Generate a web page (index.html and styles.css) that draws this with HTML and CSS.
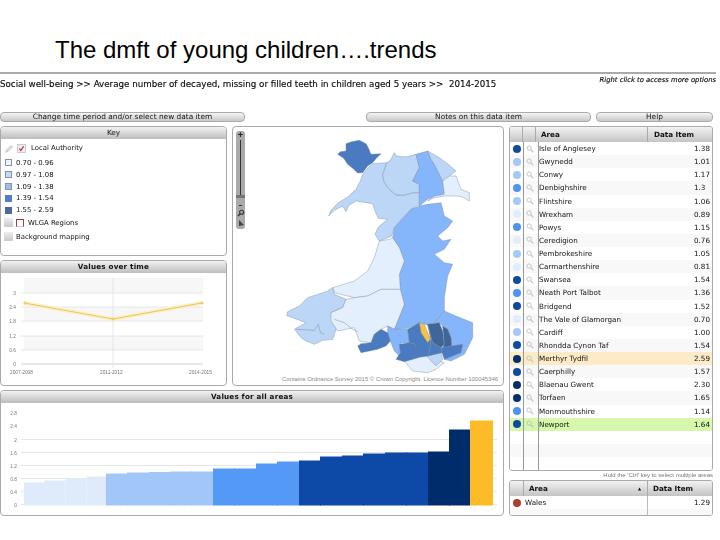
FILE: index.html
```html
<!DOCTYPE html>
<html lang="en">
<head>
<meta charset="utf-8">
<title>The dmft of young children</title>
<link rel="stylesheet" href="styles.css">
</head>
<body>
<svg class="defs" width="0" height="0" aria-hidden="true">
  <symbol id="lens" viewBox="0 0 12 12"><circle cx="4.6" cy="4.6" r="3.2" fill="none" stroke="#bdbdbd" stroke-width="1.3"/><path d="M7 7l4 4" stroke="#bdbdbd" stroke-width="1.6"/></symbol>
</svg>
<h1 class="title">The dmft of young children….trends</h1>
<div class="app">
  <div class="crumb">
    <span>Social well-being &gt;&gt; Average number of decayed, missing or filled teeth in children aged 5 years &gt;&gt;&nbsp; 2014-2015</span>
    <em>Right click to access more options</em>
  </div>
  <div class="toolbar">
    <div class="btn btn-a">Change time period and/or select new data item</div>
    <div class="btn btn-b">Notes on this data item</div>
    <div class="btn btn-c">Help</div>
  </div>
  <div class="workspace">
    <div class="left">
      <section class="panel key">
        <div class="head">Key</div>
        <div class="key-body">
          <div class="key-top">
            <svg class="pencil" viewBox="0 0 12 12"><path d="M1 11l1-3 6-6 2 2-6 6z" fill="#e4e4e4" stroke="#b5b5b5"/></svg>
            <span class="check"><svg viewBox="0 0 10 10"><path d="M2 5l2 3 4-6" fill="none" stroke="#c0203a" stroke-width="1.6"/></svg></span>
            <span>Local Authority</span>
          </div>
          <div class="legend"><i class="sw s1"></i>0.70 - 0.96</div>
          <div class="legend"><i class="sw s2"></i>0.97 - 1.08</div>
          <div class="legend"><i class="sw s3"></i>1.09 - 1.38</div>
          <div class="legend"><i class="sw s4"></i>1.39 - 1.54</div>
          <div class="legend"><i class="sw s5"></i>1.55 - 2.59</div>
          <div class="layer gap-a"><i class="toggle"></i><i class="red-box"></i>WLGA Regions</div>
          <div class="layer gap-b"><i class="toggle"></i>Background mapping</div>
        </div>
      </section>
      <section class="panel trend">
        <div class="head head-b">Values over time</div>
        <svg class="chart" viewBox="0 -3 225 113" width="225" height="113">
          <g class="band"><rect x="23" y="2" width="179" height="15"/><rect x="23" y="31" width="179" height="14"/><rect x="23" y="60" width="179" height="14"/></g>
          <g class="grid">
            <path d="M20 17H202M20 31H202M20 45H202M20 60H202M20 74H202"/>
            <path class="axis" d="M20 88H202"/>
            <path d="M112 2V92"/>
          </g>
          <path class="glow" d="M23 27L112 43 201 27"/>
          <path class="line" d="M23 27L112 43 201 27"/>
          <g class="pts"><circle cx="24" cy="27" r="1.5"/><circle cx="112" cy="43" r="1.5"/><circle cx="201" cy="27" r="1.5"/></g>
          <g class="tick">
            <text x="15" y="19" text-anchor="end">3</text><text x="15" y="33" text-anchor="end">2.4</text><text x="15" y="47" text-anchor="end">1.8</text><text x="15" y="62" text-anchor="end">1.2</text><text x="15" y="76" text-anchor="end">0.6</text><text x="15" y="90" text-anchor="end">0</text>
            <text x="9" y="98">2007-2008</text><text x="99" y="98">2011-2012</text><text x="188" y="98">2014-2015</text>
          </g>
        </svg>
      </section>
      <section class="panel map">
        <svg class="map-svg" viewBox="6 18 807 774" width="269" height="258">
          <g class="areas">
            <path class="c4" d="M345 68L362 62 385 58 405 68 412 80 420 100 450 98 436 112 425 125 410 135 395 155 380 156 365 142 350 130 338 112 320 100 328 92 345 90z"/>
            <path class="c2" d="M293 285L300 268 322 245 350 228 375 205 388 180 395 160 410 142 425 128 468 125 455 160 458 180 470 200 495 222 520 222 545 215 565 215 565 250 540 265 515 290 490 320 482 345 445 360 432 340 442 318 470 295 442 292 432 270 425 248 405 245 375 240 352 255 345 272 335 255 310 268z"/>
            <path class="c2" d="M468 125L478 118 490 95 497 105 525 108 555 100 565 140 545 180 565 190 565 215 545 215 520 222 495 222 470 200 458 180 455 160z"/>
            <path class="c3" d="M555 100L590 90 600 115 610 130 635 180 640 220 610 226 590 235 565 255 565 190 545 180 565 140z"/>
            <path class="c2" d="M590 90L625 110 650 128 675 150 655 165 640 180 635 180 610 130 600 115z"/>
            <path class="c1" d="M675 165L690 205 715 215 715 240 695 228 680 225 640 225 605 232 590 240 610 226 640 220 635 180 655 165z"/>
            <path class="c3" d="M565 255L590 250 630 245 640 285 665 300 650 320 620 345 635 360 660 355 640 385 610 400 640 425 665 430 650 465 640 530 640 570 610 605 590 612 565 605 530 622 490 625 520 550 508 505 505 460 520 420 505 380 485 350 490 320 540 265z"/>
            <path class="c1" d="M445 360L475 355 485 350 505 380 520 420 505 460 508 505 450 505 410 525 370 530 310 515 305 500 370 480 410 450 430 410z"/>
            <path class="c2" d="M167 584L170 572 205 555 230 530 290 510 305 500 310 520 345 535 335 560 300 575 315 625 305 655 275 658 250 670 225 660 210 650 190 625 225 605 185 590z"/>
            <path class="c1" d="M345 535L370 530 410 525 450 505 508 505 520 550 490 625 470 615 450 625 430 640 420 665 385 660 370 620 320 630 300 600 300 575 335 560z"/>
            <path class="c3" d="M640 570L675 585 725 605 725 650 700 700 660 720 640 715 690 695 695 670 662 675 660 650 650 625 635 615 625 605 610 605z"/>
            <path class="c3" d="M470 615L490 625 530 625 535 665 510 665 505 705 490 690 478 660 470 635z"/>
            <path class="c4" d="M380 675L390 668 420 665 430 640 450 625 470 635 478 660 465 675 440 685 390 695z"/>
            <path class="c1" d="M520 720L555 712 585 700 615 715 640 725 615 745 590 755 545 750z"/>
            <path class="c4" d="M505 670L535 665 555 670 560 710 520 722 495 715 508 695z"/>
            <path class="c2" d="M582 700L630 695 635 715 615 735z"/>
            <path class="c4" d="M530 625L565 605 600 660 592 705 555 710 555 670 535 665z"/>
            <path class="c4" d="M590 610L605 665 630 680 633 695 592 705 600 660z"/>
            <path class="c5" d="M590 610L625 605 635 630 640 670 630 680 605 665z"/>
            <path class="c5" d="M635 615L650 625 660 650 662 675 635 680 640 670z"/>
            <path class="c4" d="M630 680L662 675 695 670 690 695 640 715 633 695z"/>
            <path class="cy" d="M565 605L580 610 598 655 590 665 570 635z"/>
          </g>
          <path class="inlet" d="M195 625L250 628 262 610 268 635 280 640M340 605L365 625 380 632M310 595L340 605"/>
        </svg>
        <div class="zoombar">
          <span class="z-plus">+</span>
          <i class="z-track"></i>
          <i class="z-thumb"></i>
          <i class="z-minus"></i>
          <svg class="z-ico" viewBox="0 0 8 8"><circle cx="4.6" cy="3.2" r="2" fill="none" stroke="#333" stroke-width="1.1"/><path d="M3 5L1 7" stroke="#333" stroke-width="1.4"/></svg>
          <svg class="z-ico" viewBox="0 0 8 8"><path d="M2 1L7 6 2 7z" fill="#444"/></svg>
        </div>
        <div class="copy">Contains Ordnance Survey 2015 © Crown Copyright. Licence Number 100045346</div>
      </section>
      <section class="panel bars">
        <div class="head head-b">Values for all areas</div>
        <svg class="chart" viewBox="0 4.500 501 112" width="501" height="112">
          <g class="grid"><path d="M20 41H496M20 54H496M20 67H496M20 80H496M20 93H496M20 106H496"/></g>
          <g class="r1"><rect x="23" y="84" width="21" height="23"/><rect x="43.500" y="82" width="21" height="25"/><rect x="64.500" y="80" width="21" height="27"/><rect x="85.500" y="78" width="21.500" height="29"/></g>
          <g class="r2"><rect x="105" y="75" width="22" height="32"/><rect x="126" y="74" width="22" height="33"/><rect x="148" y="73.500" width="22" height="33.500"/><rect x="169" y="73" width="22" height="34"/><rect x="190" y="73" width="22" height="34"/></g>
          <g class="r3"><rect x="212" y="70" width="22" height="37"/><rect x="233" y="70" width="22" height="37"/><rect x="255" y="65" width="22" height="42"/><rect x="276" y="63" width="22" height="44"/></g>
          <g class="r4"><rect x="298" y="62" width="22" height="45"/><rect x="319" y="58" width="22" height="49"/><rect x="341" y="57" width="22" height="50"/><rect x="362" y="55" width="22" height="52"/><rect x="384" y="54" width="22" height="53"/><rect x="405" y="54" width="22" height="53"/></g>
          <g class="r5"><rect x="427" y="53" width="22" height="54"/><rect x="448" y="31" width="21" height="76"/></g>
          <rect class="ry" x="469" y="22" width="23" height="85"/>
          <g class="tick">
            <text x="16" y="16" text-anchor="end">2.8</text><text x="16" y="29" text-anchor="end">2.4</text><text x="16" y="43" text-anchor="end">2</text><text x="16" y="56" text-anchor="end">1.6</text><text x="16" y="69" text-anchor="end">1.2</text><text x="16" y="82" text-anchor="end">0.8</text><text x="16" y="95" text-anchor="end">0.4</text><text x="16" y="108" text-anchor="end">0</text>
          </g>
        </svg>
      </section>
    </div>
    <div class="right">
      <div class="table main-table">
        <div class="t-head"><span></span><span></span><b>Area</b><b>Data Item</b></div>
        <div class="t-rows">
          <div class="row"><i class="dot d4"></i><svg class="lens"><use href="#lens"/></svg><span>Isle of Anglesey</span><span class="val">1.38</span></div>
          <div class="row"><i class="dot d2"></i><svg class="lens"><use href="#lens"/></svg><span>Gwynedd</span><span class="val">1.01</span></div>
          <div class="row"><i class="dot d2"></i><svg class="lens"><use href="#lens"/></svg><span>Conwy</span><span class="val">1.17</span></div>
          <div class="row"><i class="dot d3"></i><svg class="lens"><use href="#lens"/></svg><span>Denbighshire</span><span class="val">1.3&nbsp;&nbsp;</span></div>
          <div class="row"><i class="dot d2"></i><svg class="lens"><use href="#lens"/></svg><span>Flintshire</span><span class="val">1.06</span></div>
          <div class="row"><i class="dot d1"></i><svg class="lens"><use href="#lens"/></svg><span>Wrexham</span><span class="val">0.89</span></div>
          <div class="row"><i class="dot d3"></i><svg class="lens"><use href="#lens"/></svg><span>Powys</span><span class="val">1.15</span></div>
          <div class="row"><i class="dot d1"></i><svg class="lens"><use href="#lens"/></svg><span>Ceredigion</span><span class="val">0.76</span></div>
          <div class="row"><i class="dot d2"></i><svg class="lens"><use href="#lens"/></svg><span>Pembrokeshire</span><span class="val">1.05</span></div>
          <div class="row"><i class="dot d1"></i><svg class="lens"><use href="#lens"/></svg><span>Carmarthenshire</span><span class="val">0.81</span></div>
          <div class="row"><i class="dot d4"></i><svg class="lens"><use href="#lens"/></svg><span>Swansea</span><span class="val">1.54</span></div>
          <div class="row"><i class="dot d3"></i><svg class="lens"><use href="#lens"/></svg><span>Neath Port Talbot</span><span class="val">1.36</span></div>
          <div class="row"><i class="dot d4"></i><svg class="lens"><use href="#lens"/></svg><span>Bridgend</span><span class="val">1.52</span></div>
          <div class="row"><i class="dot d1"></i><svg class="lens"><use href="#lens"/></svg><span>The Vale of Glamorgan</span><span class="val">0.70</span></div>
          <div class="row"><i class="dot d2"></i><svg class="lens"><use href="#lens"/></svg><span>Cardiff</span><span class="val">1.00</span></div>
          <div class="row"><i class="dot d4"></i><svg class="lens"><use href="#lens"/></svg><span>Rhondda Cynon Taf</span><span class="val">1.54</span></div>
          <div class="row hl-a"><i class="dot d5"></i><svg class="lens"><use href="#lens"/></svg><span>Merthyr Tydfil</span><span class="val">2.59</span></div>
          <div class="row"><i class="dot d4"></i><svg class="lens"><use href="#lens"/></svg><span>Caerphilly</span><span class="val">1.57</span></div>
          <div class="row"><i class="dot d5"></i><svg class="lens"><use href="#lens"/></svg><span>Blaenau Gwent</span><span class="val">2.30</span></div>
          <div class="row"><i class="dot d5"></i><svg class="lens"><use href="#lens"/></svg><span>Torfaen</span><span class="val">1.65</span></div>
          <div class="row"><i class="dot d3"></i><svg class="lens"><use href="#lens"/></svg><span>Monmouthshire</span><span class="val">1.14</span></div>
          <div class="row hl-b"><i class="dot d4"></i><svg class="lens"><use href="#lens"/></svg><span>Newport</span><span class="val">1.64</span></div>
          <div class="row"></div>
          <div class="row"></div>
          <div class="row"></div>
        </div>
      </div>
      <div class="hint">Hold the 'Ctrl' key to select multiple areas</div>
      <div class="table wales-table">
        <div class="w-head"><span></span><b>Area<i class="sort">▲</i></b><b>Data Item</b></div>
        <div class="w-row"><i class="dot brown"></i><span>Wales</span><span class="val">1.29</span></div>
        <div class="w-row"><span></span><span></span><span></span></div>
      </div>
    </div>
  </div>
</div>
</body>
</html>
```
FILE: styles.css
```css
* { box-sizing: border-box; }
body { margin: 0; width: 720px; height: 540px; overflow: hidden; background: #fff; font-family: "DejaVu Sans", sans-serif; color: #111; }
.defs { position: absolute; }
.title { margin: 0; height: 72px; padding: 36px 0 0 55px; font: 400 24px/28px "Liberation Sans", sans-serif; color: #000; }
.app { width: 716px; filter: blur(.3px); }
.crumb { border-top: 2px solid #aaa; height: 40px; padding-top: 2px; display: flex; justify-content: space-between; align-items: flex-start; font-size: 8.730px; line-height: 11px; white-space: nowrap; -webkit-text-stroke: .15px #000; }
.crumb span { margin-top: 3px; }
.crumb em { font-size: 6.800px; line-height: 9px; }
.toolbar { display: flex; height: 10px; margin-bottom: 4px; }
.btn { height: 10px; border: 1px solid #aaa; border-radius: 4px; background: linear-gradient(#f4f4f4, #c9c9c9); font-size: 7.400px; line-height: 8px; text-align: center; white-space: nowrap; }
.btn-a { width: 245px; }
.btn-b { width: 225px; margin-left: auto; }
.btn-c { width: 117px; margin-left: 5px; margin-right: 3px; }
.workspace { display: flex; gap: 5px; }
.left { width: 504px; display: grid; grid-template-columns: 227px 272px; grid-template-rows: 130px 126px 126px; gap: 4px 5px; }
.panel { position: relative; border: 1px solid #aaa; border-radius: 4px; background: #fff; overflow: hidden; }
.head { height: 12px; background: linear-gradient(#f2f2f2, #bdbdbd); font-size: 7.200px; font-weight: 400; line-height: 12px; text-align: center; }
.head-b { font-weight: 700; letter-spacing: .2px; }
.key { grid-row: 1; grid-column: 1; }
.trend { grid-row: 2; grid-column: 1; }
.map { grid-row: 1 / span 2; grid-column: 2; }
.bars { grid-row: 3; grid-column: 1 / span 2; }
.key-body { padding: 3px 0 0 3px; font-size: 6.900px; line-height: 12px; white-space: nowrap; }
.key-top { display: flex; align-items: center; height: 12px; margin-left: 1px; margin-bottom: 3px; }
.pencil { width: 9px; height: 9px; margin-right: 3px; }
.check { width: 9px; height: 9px; border: 1px solid #ccc; background: #eee; margin-right: 5px; display: flex; }
.check svg { width: 100%; height: 100%; }
.legend { display: flex; align-items: center; height: 11.800px; margin-left: 1px; }
.sw { width: 7px; height: 7px; border: 1px solid #8493a8; margin-right: 4px; }
.s1 { background: #eef4fd; }
.s2 { background: #c5daf5; }
.s3 { background: #9dbfec; }
.s4 { background: #4f7ec4; border-color: #4f7ec4; }
.s5 { background: #4a6a9e; border-color: #4a6a9e; }
.layer { display: flex; align-items: center; height: 12px; }
.gap-a { margin-top: 1px; }
.gap-b { margin-top: 2px; }
.toggle { width: 9px; height: 9px; border-radius: 1px; background: linear-gradient(#eee, #c8c8c8); margin-right: 3px; }
.red-box { width: 8px; height: 8px; border: 1px solid #a33a46; border-bottom-color: #ccc; margin-right: 4px; }
.chart { display: block; }
.band rect { fill: #f7f7f7; }
.grid path { fill: none; stroke: #e6e6e6; stroke-width: 1; }
.grid .axis { stroke: #cfcfcf; }
.glow { fill: none; stroke: #fdf0c8; stroke-width: 4; }
.line { fill: none; stroke: #e9c560; stroke-width: 1.2; }
.pts circle { fill: #f1cc5e; }
.tick text { font: 4.800px "Liberation Sans", sans-serif; fill: #777; }
.r1 rect { fill: #dfebfb; }
.r2 rect { fill: #a3c6f9; }
.r3 rect { fill: #5599f7; }
.r4 rect { fill: #0d4aa8; }
.r5 rect { fill: #002c6c; }
.ry { fill: #fdbb27; }
.map-svg { display: block; }
.areas path { stroke: #7a8594; stroke-width: 1.2; stroke-linejoin: round; }
.inlet { fill: none; stroke: #7a8594; stroke-width: 1.4; }
.c1 { fill: #e3effd; }
.c2 { fill: #bcd6f8; }
.c3 { fill: #85b6fb; }
.c4 { fill: #4a7abf; }
.c5 { fill: #3f6698; }
.cy { fill: #f4c344; }
.zoombar { position: absolute; left: 3px; top: 4px; width: 9px; height: 98px; border-radius: 3px; background: #aaa; display: flex; flex-direction: column; align-items: center; }
.z-plus { font: 700 9px/9px "Liberation Sans", sans-serif; color: #222; height: 9px; }
.z-track { width: 1px; height: 55px; background: #333; }
.z-thumb { width: 9px; height: 3px; background: #777; }
.z-minus { width: 3px; height: 1px; background: #333; margin: 7px 0 3px; }
.z-ico { width: 8px; height: 8px; margin-bottom: 2px; }
.copy { position: absolute; right: 5px; bottom: 3px; font: 5.950px "Liberation Sans", sans-serif; color: #8a8a8a; white-space: nowrap; }
.right { width: 204px; font-size: 7.200px; white-space: nowrap; }
.table { border: 1px solid #aaa; border-radius: 3px; overflow: hidden; background: #fff; }
.main-table { height: 345px; }
.t-head, .row { display: grid; grid-template-columns: 13px 13px 112px 1fr; }
.t-head { height: 15px; background: linear-gradient(#f2f2f2, #c4c4c4); align-items: center; }
.t-head span, .t-head b { height: 15px; line-height: 15px; font-weight: 700; padding-left: 5px; border-right: 1px solid #aaa; }
.t-head b:last-child { border-right: 0; }
.t-head b:nth-child(4) { padding-left: 6px; }
.t-rows { position: relative; }
.t-rows::after { content: ""; position: absolute; left: 13px; top: 0; height: 329px; width: 14px; border-left: 1px solid #999; border-right: 1px solid #999; }
.row { height: 13.140px; align-items: center; background: #fff; line-height: 13px; }
.row:nth-child(even) { background: #f8f8f8; }
.row > span { padding-left: 3px; }
.row .val { grid-column: 4; text-align: right; padding-right: 2px; }
.row .lens { width: 8px; height: 8px; justify-self: center; }
.row .dot { justify-self: center; }
.hl-a, .row.hl-a:nth-child(even) { background: #fdeac6; }
.hl-b, .row.hl-b:nth-child(even) { background: #d6f8ad; }
.dot { width: 8px; height: 8px; border-radius: 50%; display: block; }
.d1 { background: #e2edfb; }
.d2 { background: #a6c8f8; }
.d3 { background: #4f94ee; }
.d4 { background: #0f4a9e; }
.d5 { background: #062f6a; }
.brown { background: #a8402c; justify-self: center; }
.hint { height: 9px; font: 6px/9px "Liberation Sans", sans-serif; color: #777; text-align: right; }
.wales-table { height: 36px; }
.w-head, .w-row { display: grid; grid-template-columns: 14px 124px 1fr; }
.w-head { height: 15px; background: linear-gradient(#f2f2f2, #c4c4c4); }
.w-head span, .w-head b { border-right: 1px solid #aaa; line-height: 15px; padding-left: 5px; font-weight: 700; position: relative; }
.w-head b:last-child { border-right: 0; }
.sort { position: absolute; right: 6px; font-style: normal; font-size: 4px; }
.w-row { height: 13px; align-items: center; line-height: 13px; }
.w-row + .w-row { height: 8px; background: #f8f8f8; }
.w-row > span:nth-child(2) { padding-left: 1px; border-right: 1px solid #bbb; height: 100%; }
.w-row .val { text-align: right; padding-right: 2px; }
```
